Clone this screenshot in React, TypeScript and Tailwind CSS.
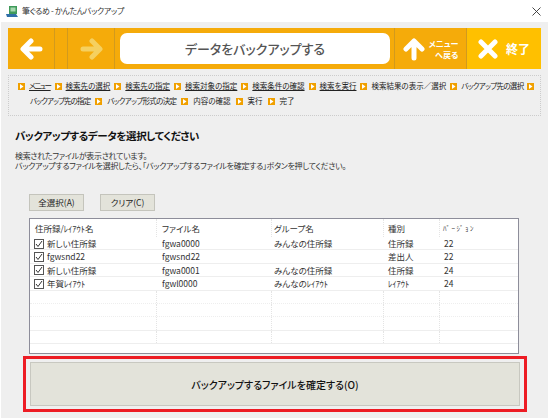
const navRow1 = [
  { label: "メニュー", link: true, cls: "tracking-[-1.4px]" },
  { label: "検索先の選択", link: true, cls: "" },
  { label: "検索先の指定", link: true, cls: "" },
  { label: "検索対象の指定", link: true, cls: "" },
  { label: "検索条件の確認", link: true, cls: "" },
  { label: "検索を実行", link: true, cls: "" },
  { label: "検索結果の表示／選択", link: false, cls: "" },
  { label: "バックアップ先の選択", link: false, cls: "tracking-[-0.7px]" },
];

const navRow2 = ["内容の確認", "実行", "完了"];

const rows = [
  { name: "新しい住所録", file: "fgwa0000", group: "みんなの住所録", kind: "住所録", ver: "22" },
  { name: "fgwsnd22", file: "fgwsnd22", group: "", kind: "差出人", ver: "22" },
  { name: "新しい住所録", file: "fgwa0001", group: "みんなの住所録", kind: "住所録", ver: "24" },
  { name: "年賀ﾚｲｱｳﾄ", file: "fgwl0000", group: "みんなのﾚｲｱｳﾄ", kind: "ﾚｲｱｳﾄ", ver: "24" },
];

const cols = "grid grid-cols-[127px_115px_112px_56px_1fr]";
const jp = "font-['Noto_Sans_CJK_JP','Noto_Sans',sans-serif] [font-feature-settings:'palt']";

function NavIcon() {
  return (
    <span className="flex h-[7px] w-[7px] shrink-0 items-center justify-center bg-[#f0a000]">
      <svg width="5" height="5" viewBox="0 0 5 5">
        <path d="M1 0 L4.5 2.5 L1 5 Z" fill="#fff" />
      </svg>
    </span>
  );
}

function Arrow({ color, flip }: { color: string; flip?: boolean }) {
  return (
    <svg width="23" height="22" viewBox="0 0 23 22" className={flip ? "rotate-180" : ""}>
      <path d="M20 11 H4 M11 3 L3 11 L11 19" fill="none" stroke={color} strokeWidth="5" strokeLinecap="round" strokeLinejoin="round" />
    </svg>
  );
}

function Check() {
  return (
    <span className="flex h-[10px] w-[10px] shrink-0 items-center justify-center border border-[#555] bg-white">
      <svg width="8" height="8" viewBox="0 0 8 8">
        <path d="M1 4 L3 6.5 L7 1" fill="none" stroke="#333" strokeWidth="1" />
      </svg>
    </span>
  );
}

function EmptyRow({ dotted }: { dotted?: boolean }) {
  return (
    <div className={`${cols} h-[13.4px] border-b border-[#eeeeee] ${dotted ? "border-dotted" : ""}`}>
      <div className="border-r border-dotted border-[#e4e4e4]" />
      <div className="border-r border-dotted border-[#e4e4e4]" />
      <div className="border-r border-dotted border-[#e4e4e4]" />
      <div className="border-r border-dotted border-[#e4e4e4]" />
      <div />
    </div>
  );
}

export default function App() {
  return (
    <div className={`${jp} flex h-[418px] w-[548px] flex-col overflow-hidden bg-white text-[#222]`}>
      {/* title bar */}
      <div className="flex h-[22px] shrink-0 items-center justify-between pl-[6px] pr-[6px]">
        <div className="flex items-center gap-[4px]">
          <svg width="12" height="13" viewBox="0 0 12 13">
            <rect x="3" y="1" width="8" height="8" fill="#3f9a5a" />
            <rect x="4.5" y="2.5" width="5" height="4" fill="#a7d8b0" />
            <path d="M0 9 H10 L12 12 H1 Z" fill="#2f6fa8" />
          </svg>
          <span className="text-[8px] leading-none tracking-[-0.35px] text-[#333]">筆ぐるめ - かんたんバックアップ</span>
        </div>
        <svg width="9" height="9" viewBox="0 0 9 9" className="mr-[1px]">
          <path d="M0.5 0.5 L8.5 8.5 M8.5 0.5 L0.5 8.5" stroke="#333" strokeWidth="0.9" />
        </svg>
      </div>

      <div className="ml-px flex flex-1 flex-col bg-[#efefef] px-[7px] pt-[6px]">
        {/* toolbar */}
        <div className="flex h-[41px] shrink-0 items-stretch bg-[#f5ab0a]">
          <div className="flex w-[47px] items-center justify-center border-r border-[#d19a1e]">
            <Arrow color="#ffffff" />
          </div>
          <div className="w-[13px] border-r border-[#d19a1e]" />
          <div className="flex w-[47px] items-center justify-center border-r border-[#d19a1e]">
            <Arrow color="#f5d060" flip />
          </div>
          <div className="flex flex-1 items-center py-[5px] pl-[5px] pr-[4px]">
            <div className="flex h-full w-full items-center justify-center rounded-[7px] bg-white text-[13px] font-medium text-[#555]">
              データをバックアップする
            </div>
          </div>
          <div className="flex w-[73px] items-center justify-center gap-[4px] border-l border-r border-[#d19a1e]">
            <svg width="22" height="24" viewBox="0 0 22 24">
              <path d="M11 21 V5 M3 12 L11 4 L19 12" fill="none" stroke="#fff" strokeWidth="5" strokeLinecap="round" strokeLinejoin="round" />
            </svg>
            <div className="flex flex-col items-end text-[8px] font-bold leading-[11px] text-white">
              <span>メニュー</span>
              <span>へ戻る</span>
            </div>
          </div>
          <div className="flex w-[74px] items-center justify-center gap-[8px] bg-[#ffc000]">
            <svg width="20" height="20" viewBox="0 0 20 20">
              <path d="M3 3 L17 17 M17 3 L3 17" stroke="#fff" strokeWidth="5" strokeLinecap="round" />
            </svg>
            <span className="text-[12px] font-bold text-white">終了</span>
          </div>
        </div>

        {/* breadcrumb */}
        <div className="mt-[6px] flex h-[41px] shrink-0 flex-col gap-[3px] border border-dotted border-[#cccccc] pl-[9px] pt-[4px] text-[7.5px] leading-[12px] text-[#222]">
          <div className="flex items-center gap-[4px] whitespace-nowrap">
            {navRow1.map((item) => (
              <div key={item.label} className="flex items-center gap-[4px]">
                <NavIcon />
                <span className={`${item.cls} ${item.link ? "underline" : ""}`}>{item.label}</span>
              </div>
            ))}
            <NavIcon />
          </div>
          <div className="flex items-center gap-[5px] whitespace-nowrap pl-[12px]">
            <span className="tracking-[-0.9px]">バックアップ先の指定</span>
            <NavIcon />
            <span className="tracking-[-0.7px]">バックアップ形式の決定</span>
            {navRow2.map((label) => (
              <div key={label} className="flex items-center gap-[5px]">
                <NavIcon />
                <span>{label}</span>
              </div>
            ))}
          </div>
        </div>

        {/* heading */}
        <h1 className="mt-[12px] h-[16px] pl-[7px] text-[10.5px] font-bold leading-[16px] tracking-[-0.4px] text-[#111]">
          バックアップするデータを選択してください
        </h1>
        <p className="mt-[7px] h-[20px] pl-[7px] text-[8px] leading-[10px] tracking-[-0.3px] text-[#333]">
          検索されたファイルが表示されています。
          <br />
          バックアップするファイルを選択したら、「バックアップするファイルを確定する」ボタンを押してください。
        </p>

        {/* select buttons */}
        <div className="mt-[23px] flex gap-[16px] pl-[21px]">
          <button className="h-[17px] w-[55px] border border-[#c4c4bc] bg-[#e3e3da] text-[8.5px] leading-none text-[#222]">
            全選択(A)
          </button>
          <button className="h-[17px] w-[55px] border border-[#c4c4bc] bg-[#e3e3da] text-[8.5px] leading-none text-[#222]">
            クリア(C)
          </button>
        </div>

        {/* file list */}
        <div className="ml-[21px] mt-[7px] h-[136px] w-[490px] shrink-0 overflow-hidden border border-[#8d8d9a] bg-white text-[8.5px] leading-[13px] text-[#333]">
          <div className={`${cols} h-[18px] items-center`}>
            <span className="border-r border-dotted border-[#e4e4e4] pl-[5px] leading-[18px]">住所録/ﾚｲｱｳﾄ名</span>
            <span className="border-r border-dotted border-[#e4e4e4] pl-[5px] leading-[18px]">ファイル名</span>
            <span className="border-r border-dotted border-[#e4e4e4] pl-[2px] leading-[18px]">グループ名</span>
            <span className="border-r border-dotted border-[#e4e4e4] pl-[4px] leading-[18px]">種別</span>
            <span className="pl-[3px] text-[7px] tracking-[1.5px] leading-[18px]">ﾊﾞｰｼﾞｮﾝ</span>
          </div>
          {rows.map((row) => (
            <div key={row.file} className={`${cols} h-[13.4px] border-b border-[#eeeeee]`}>
              <div className="flex items-center gap-[3px] pl-[4px]">
                <Check />
                <span>{row.name}</span>
              </div>
              <span className="pl-[5px]">{row.file}</span>
              <span className="pl-[2px]">{row.group}</span>
              <span className="pl-[4px]">{row.kind}</span>
              <span className="pl-[4px]">{row.ver}</span>
            </div>
          ))}
          <EmptyRow dotted />
          <EmptyRow dotted />
          <EmptyRow />
          <EmptyRow />
        </div>

        {/* confirm, highlighted */}
        <div className="ml-[15px] mt-[2px] w-[504px] border-[3px] border-[#ed1c24] px-[4px] py-[3px]">
          <button className="flex h-[44px] w-[490px] items-center justify-center border border-[#c8c8c0] bg-[#e3e3da] text-[10px] font-medium text-[#111]">
            バックアップするファイルを確定する(O)
          </button>
        </div>
      </div>
    </div>
  );
}
